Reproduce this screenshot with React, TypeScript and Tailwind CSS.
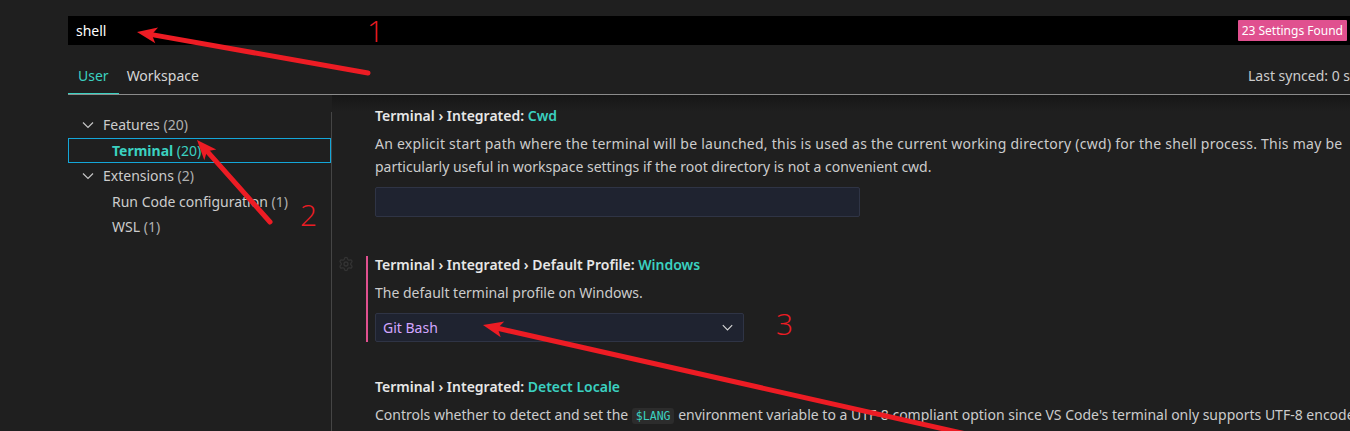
import { Settings } from 'lucide-react';

// VS Code settings editor, searched for "shell", with three red call-outs drawn on top.

const FONT = { fontFamily: '"Noto Sans", "Open Sans", sans-serif' };

function Chevron({ className = '' }: { className?: string }) {
  return (
    <svg viewBox="0 0 16 16" className={className} fill="none">
      <path d="M3 5.5l5 5 5-5" stroke="currentColor" strokeWidth="1.2" />
    </svg>
  );
}

function TreeRow({ label, count, indent, open, selected }: { label: string; count: string; indent?: boolean; open?: boolean; selected?: boolean }) {
  return (
    <div
      className={`h-[25.5px] flex items-center border ${selected ? 'border-[#14a6d8]' : 'border-transparent'} ${indent ? 'pl-[43px]' : 'pl-[11px]'}`}
    >
      {open && <Chevron className="w-4 h-4 text-[#c5c5c5] mr-[7px]" />}
      {selected ? (
        <span className="text-[#3bd1c1]">
          <span className="font-bold">{label}</span> {count}
        </span>
      ) : (
        <span className="text-[#cccccc]">
          {label} <span className="text-[#b0b0b0]">{count}</span>
        </span>
      )}
    </div>
  );
}

function SettingBlock({ path, name, modified, children }: { path: string; name: string; modified?: boolean; children: React.ReactNode }) {
  return (
    <div className="flex">
      <div className="w-[28px] shrink-0">
        {modified && <Settings className="w-4 h-4 text-[#333333]" strokeWidth={2} />}
      </div>
      <div className={`border-l-2 pl-[7px] ${modified ? 'border-[#e0508f]' : 'border-transparent'}`}>
        <div className="leading-[18px] font-semibold text-[#e7e7e7] whitespace-nowrap">
          {path} <span className="text-[#3bd1c1]">{name}</span>
        </div>
        {children}
      </div>
    </div>
  );
}

function Arrow({ tail, tip, head = 20, half = 8 }: { tail: [number, number]; tip: [number, number]; head?: number; half?: number }) {
  const dx = tip[0] - tail[0];
  const dy = tip[1] - tail[1];
  const len = Math.hypot(dx, dy);
  const ux = dx / len;
  const uy = dy / len;
  const bx = tip[0] - ux * head;
  const by = tip[1] - uy * head;
  const nx = tip[0] - ux * head * 0.75;
  const ny = tip[1] - uy * head * 0.75;
  const px = -uy * half;
  const py = ux * half;
  const pts = [tip, [bx + px, by + py], [nx, ny], [bx - px, by - py]].map((p) => p.join(',')).join(' ');
  return (
    <g>
      <line x1={tail[0]} y1={tail[1]} x2={nx} y2={ny} stroke="#ed1c24" strokeWidth="5" strokeLinecap="round" />
      <polygon points={pts} fill="#ed1c24" />
    </g>
  );
}

export default function App() {
  return (
    <div className="relative w-[1350px] h-[431px] overflow-hidden bg-[#1f1f1f] text-[14px]" style={FONT}>
      <div className="w-[1420px] pl-[68px] pt-4">
        {/* search box */}
        <div className="h-[29px] bg-black flex items-center justify-between pl-2 pr-[73px]">
          <span className="text-white">shell</span>
          <span className="h-[21px] px-[4px] flex items-center bg-[#e0508f] text-white text-[12px] rounded-[1px]">
            23 Settings Found
          </span>
        </div>

        {/* tabs */}
        <div className="h-[50px] flex items-end border-b border-[#8b8b8b]">
          <div className="w-[1180px] shrink-0 flex">
            <div className="h-[37px] px-[10px] flex items-center text-[#3bd1c1] border-b border-[#3bd1c1] -mb-px">User</div>
            <div className="h-[37px] px-[8px] flex items-center text-[#d6d6d6]">Workspace</div>
          </div>
          <div className="h-[37px] shrink-0 flex items-center text-[#cccccc] whitespace-nowrap">Last synced: 0 seconds ago</div>
        </div>

        {/* body */}
        <div className="flex">
          <div className="w-[264px] mt-[17px] h-[330px] border-r border-[#454545]">
            <TreeRow label="Features" count="(20)" open />
            <TreeRow label="Terminal" count="(20)" indent selected />
            <TreeRow label="Extensions" count="(2)" open />
            <TreeRow label="Run Code configuration" count="(1)" indent />
            <TreeRow label="WSL" count="(1)" indent />
          </div>

          <div className="relative flex-1 pl-[6px] pt-[12px]">
            <div className="absolute left-0 right-0 top-0 h-[16px] bg-gradient-to-b from-[#161616] to-transparent" />
            <SettingBlock path="Terminal › Integrated:" name="Cwd">
              <div className="mt-[7px] leading-[23px] text-[#cccccc] whitespace-nowrap">
                <div className="tracking-[0.25px]">An explicit start path where the terminal will be launched, this is used as the current working directory (cwd) for the shell process. This may be</div>
                <div>particularly useful in workspace settings if the root directory is not a convenient cwd.</div>
              </div>
              <div className="mt-[9px] w-[485px] h-[30px] bg-[#1f2330] border border-[#2f3445] rounded-[2px]" />
            </SettingBlock>

            <div className="mt-[39px]">
              <SettingBlock path="Terminal › Integrated › Default Profile:" name="Windows" modified>
                <div className="mt-[7px] leading-[23px] text-[#cccccc]">The default terminal profile on Windows.</div>
                <div className="mt-[9px] w-[369px] h-[29px] bg-[#1f2330] border border-[#2f3445] rounded-[2px] flex items-center justify-between pl-[7px] pr-[8px]">
                  <span className="text-[#d3a6ff]">Git Bash</span>
                  <Chevron className="w-[15px] h-[15px] text-[#d6d6d6]" />
                </div>
              </SettingBlock>
            </div>

            <div className="mt-[36px]">
              <SettingBlock path="Terminal › Integrated:" name="Detect Locale">
                <div className="mt-[7px] leading-[23px] text-[#cccccc] whitespace-nowrap">
                  Controls whether to detect and set the{' '}
                  <code className="px-[4px] py-[1px] rounded-[3px] bg-[#2c2c2c] text-[#3bd1c1] text-[11.5px]" style={{ fontFamily: '"DejaVu Sans Mono", monospace' }}>
                    $LANG
                  </code>{' '}
                  environment variable to a UTF-8 compliant option since VS Code's terminal only supports UTF-8 encoded data
                </div>
              </SettingBlock>
            </div>
          </div>
        </div>
      </div>

      {/* red annotations */}
      <svg className="absolute inset-0 pointer-events-none" width="1350" height="431">
        <Arrow tail={[368, 73]} tip={[137, 32]} />
        <Arrow tail={[270, 222]} tip={[197, 140]} />
        <Arrow tail={[975, 436]} tip={[483, 325]} />
      </svg>
      <span className="absolute left-[367px] top-[16px] text-[30px] leading-none font-light text-[#ed1c24]" style={{ fontFamily: '"Open Sans", sans-serif' }}>1</span>
      <span className="absolute left-[300px] top-[200px] text-[30px] leading-none font-light text-[#ed1c24]" style={{ fontFamily: '"Open Sans", sans-serif' }}>2</span>
      <span className="absolute left-[776px] top-[309px] text-[30px] leading-none font-light text-[#ed1c24]" style={{ fontFamily: '"Open Sans", sans-serif' }}>3</span>
    </div>
  );
}
